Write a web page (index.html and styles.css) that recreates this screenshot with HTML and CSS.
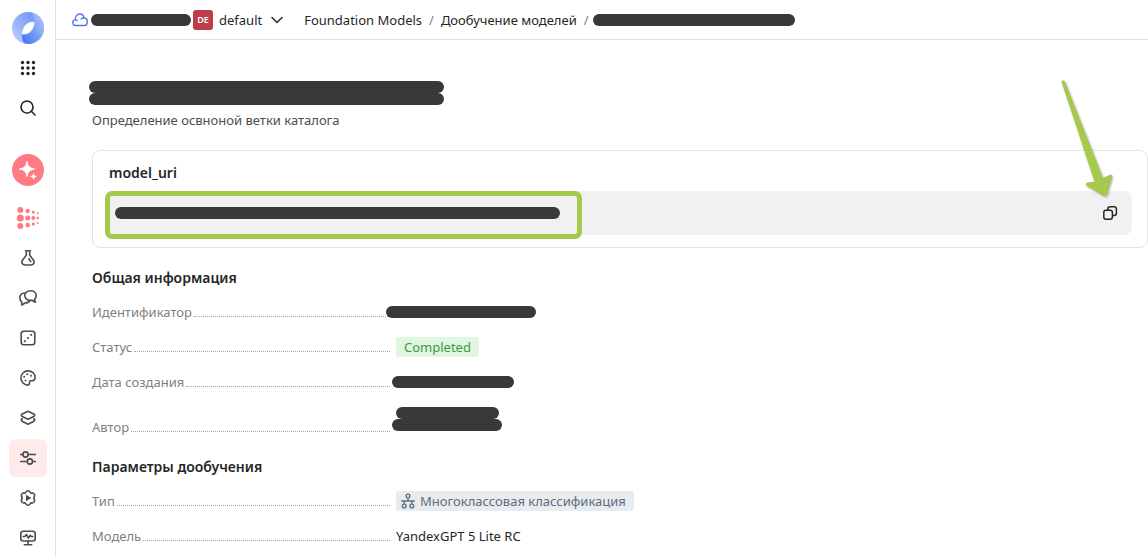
FILE: index.html
```html
<!DOCTYPE html>
<html lang="ru">
<head>
  <meta charset="UTF-8">
  <title>Дообучение моделей</title>
  <meta name="viewport" content="width=device-width, initial-scale=1.0">
  <link rel="stylesheet" href="styles.css">
</head>
<body>

<nav class="sidebar">
  <a href="#" class="logo">
    <svg width="32" height="32" viewBox="0 0 32 32">
      <defs>
        <linearGradient id="logo-light" x1="0" y1="0.8" x2="1" y2="0">
          <stop offset="0" stop-color="#b9cdfb"/>
          <stop offset="1" stop-color="#5584f5"/>
        </linearGradient>
        <linearGradient id="logo-dark" x1="0" y1="0.8" x2="1" y2="0">
          <stop offset="0" stop-color="#4678f2"/>
          <stop offset="1" stop-color="#b9cdfb"/>
        </linearGradient>
      </defs>
      <circle cx="16" cy="16" r="16" fill="url(#logo-light)"/>
      <path d="M20 .6C28 2.500 32 9 32 16c0 9-7 16-16 16-4 0-6-3-6-8 0-1 0-2 .3-3.500C14 22 18 20 20 17c2-3 3-6 2-9z" fill="url(#logo-dark)"/>
      <path d="M22 10.200c-6-.2-10.500 3-11.700 11.700 7 .5 11-3.900 11.700-11.700z" fill="#fff" stroke="#fff" stroke-linejoin="round"/>
    </svg>
  </a>
  <a href="#" class="nav-item nav-item-dark">
    <svg width="16" height="16" viewBox="0 0 16 16" fill="currentColor">
      <circle cx="2.500" cy="2.500" r="1.700"/><circle cx="8" cy="2.500" r="1.700"/><circle cx="13.500" cy="2.500" r="1.700"/>
      <circle cx="2.500" cy="8" r="1.700"/><circle cx="8" cy="8" r="1.700"/><circle cx="13.500" cy="8" r="1.700"/>
      <circle cx="2.500" cy="13.500" r="1.700"/><circle cx="8" cy="13.500" r="1.700"/><circle cx="13.500" cy="13.500" r="1.700"/>
    </svg>
  </a>
  <a href="#" class="nav-item nav-item-dark">
    <svg class="line" width="16" height="16" viewBox="0 0 16 16">
      <circle cx="7" cy="7" r="6"/><path d="M11.300 11.300l3.700 3.700"/>
    </svg>
  </a>
  <a href="#" class="assistant">
    <svg width="32" height="32" viewBox="0 0 32 32">
      <circle cx="16" cy="16" r="16" fill="#ff7b81"/>
      <path d="M15 7.500c1 5 2.500 6.500 7.500 7.500-5 1-6.500 2.500-7.500 7.500-1-5-2.500-6.500-7.500-7.500 5-1 6.500-2.500 7.500-7.500z" fill="#fff" stroke="#fff" stroke-linejoin="round"/>
      <path d="M21.500 19.500c.5 2 1 2.500 3 3-2 .5-2.500 1-3 3-.5-2-1-2.500-3-3 2-.5 2.500-1 3-3z" fill="#fff" stroke="#fff" stroke-width=".5"/>
    </svg>
  </a>
  <a href="#" class="nav-item">
    <svg width="24" height="24" viewBox="0 0 24 24" fill="#ff7b81">
      <circle cx="4.300" cy="4" r="3"/><circle cx="4.300" cy="12" r="3.500"/><circle cx="4.300" cy="20" r="3"/>
      <circle cx="11.700" cy="5" r="2.200"/><circle cx="11.700" cy="12" r="2.500"/><circle cx="11.700" cy="19" r="2.200"/>
      <circle cx="17.300" cy="6" r="1.600"/><circle cx="17.300" cy="12" r="1.900"/><circle cx="17.300" cy="18" r="1.600"/>
      <circle cx="21.700" cy="7" r="1"/><circle cx="21.700" cy="12" r="1.300"/><circle cx="21.700" cy="17" r="1"/>
    </svg>
  </a>
  <a href="#" class="nav-item">
    <svg class="line" width="16" height="16" viewBox="0 0 16 16">
      <path d="M5.500.8h5M6.300 1v4.200L2.600 10C1 12.500 2.300 15 5 15h6c2.700 0 4-2.500 2.400-5L9.700 5.200V1M8.800 8.700l1.900 2.800"/>
    </svg>
  </a>
  <a href="#" class="nav-item">
    <svg class="line" width="18" height="16" viewBox="0 0 18 16">
      <path d="M11.500.8c3.300 0 5.700 1.900 5.700 4.800 0 1.500-.6 2.700-1.600 3.600l.7 3-3.200-1.900c-4.400.6-7.300-1.500-7.300-4.700C5.800 2.800 8.200.8 11.500.8z"/>
      <path d="M5.700 3C2.900 3.200.8 5.200.8 7.900c0 1.700.7 3 1.900 3.900l.1 3.300 3.200-2.100c2.100 0 3.900-.8 4.900-2.500"/>
    </svg>
  </a>
  <a href="#" class="nav-item">
    <svg class="line" width="16" height="16" viewBox="0 0 16 16">
      <rect x="1.200" y="1.200" width="13.600" height="13.600" rx="2.500"/>
      <g class="dots"><circle cx="4.800" cy="11.200" r="1.100"/><circle cx="8" cy="8" r="1.100"/><circle cx="11.200" cy="4.800" r="1.100"/></g>
    </svg>
  </a>
  <a href="#" class="nav-item">
    <svg class="line" width="16" height="16" viewBox="0 0 16 16">
      <path d="M8 .9c4.200 0 7.100 2.800 7.100 6.400 0 2.500-1.300 3.400-3.200 3.400H11c-1.300 0-1.600.8-1.500 2 .1 1.400-.4 2.400-1.500 2.400C4 15.100.9 12 .9 8S4 .9 8 .9z"/>
      <g class="dots"><circle cx="4.200" cy="6.800" r="1"/><circle cx="7.200" cy="4.200" r="1"/><circle cx="11" cy="5.700" r="1"/><circle cx="5.500" cy="10.500" r="1"/></g>
    </svg>
  </a>
  <a href="#" class="nav-item">
    <svg class="line" width="16" height="16" viewBox="0 0 16 16">
      <path d="M8 1.200L13.800 4c1.300.7 1.300 1.800 0 2.500L8 9.200 2.200 6.500C.9 5.800.9 4.700 2.200 4z"/>
      <path d="M2.200 8.800c-1.300.7-1.300 1.700 0 2.400L8 14.200l5.800-3c1.300-.7 1.300-1.700 0-2.400"/>
    </svg>
  </a>
  <a href="#" class="nav-item nav-item-active">
    <svg class="line" width="16" height="16" viewBox="0 0 16 16">
      <path d="M.7 4.500h2.100M8.200 4.500h7.100M.7 11.500h6.500M12.600 11.500h2.700"/>
      <circle cx="5.500" cy="4.500" r="2.600"/><circle cx="9.900" cy="11.500" r="2.600"/>
    </svg>
  </a>
  <a href="#" class="nav-item">
    <svg class="line" width="16" height="16" viewBox="0 0 16 16">
      <path d="M6 2C6.600.4 9.400.4 10 2c.4 1 1.100 1.300 2 1.100 1.800-.3 3.300 1.800 2.300 3.400-.6 1-.6 2 0 3 1 1.600-.5 3.700-2.300 3.400-.9-.2-1.600.1-2 1.100-.6 1.600-3.400 1.600-4 0-.4-1-1.100-1.300-2-1.100-1.800.3-3.300-1.800-2.300-3.400.6-1 .6-2 0-3C.7 4.900 2.200 2.800 4 3.100c.9.2 1.600-.1 2-1.100z"/>
      <path d="M6 4.800v6.400L11.300 8z" fill="currentColor" stroke="none"/>
    </svg>
  </a>
  <a href="#" class="nav-item">
    <svg class="line" width="16" height="16" viewBox="0 0 16 16">
      <rect x=".8" y="1.200" width="14.400" height="9.800" rx="2.500"/>
      <path d="M3.200 6.500h1.700l1.500-2 2.100 3.600 1.800-2.800.9 1.200h1.600M8 11v3.500M4.300 14.700h7.400"/>
    </svg>
  </a>
</nav>

<div class="page">
  <header class="topbar">
    <svg class="cloud" width="16" height="16" viewBox="0 0 16 16">
      <path d="M3.500 13.500C1.900 13.500.7 12.300.7 10.700.7 9.100 1.800 7.900 3.300 7.900 3 4.500 5 2 7.800 2c2.300 0 3.900 1.500 4.100 4 2 .1 3.400 1.700 3.400 3.700 0 2.200-1.500 3.800-3.500 3.800zM3.300 7.900c.8 0 1.300.2 1.900.7M11.900 6c-1.100-.1-2 .3-2.700 1.100"/>
    </svg>
    <span class="mask mask-cloud"></span>
    <span class="folder-badge">DE</span>
    <button type="button" class="folder">default
      <svg width="12" height="8" viewBox="0 0 12 8"><path d="M1 1.500l5 5 5-5"/></svg>
    </button>
    <div class="breadcrumbs">
      <a href="#">Foundation Models</a>
      <span class="slash">/</span>
      <a href="#">Дообучение моделей</a>
      <span class="slash">/</span>
    </div>
    <span class="mask mask-crumb"></span>
  </header>

  <main>
    <div class="title">
      <span class="mask"></span>
      <span class="mask"></span>
    </div>
    <p class="description">Определение освноной ветки каталога</p>

    <section class="card">
      <h3>model_uri</h3>
      <div class="uri">
        <span class="mask mask-uri"></span>
        <div class="highlight"></div>
        <button type="button" class="copy" aria-label="Копировать">
          <svg width="16" height="16" viewBox="0 0 16 16">
            <rect x="1.800" y="5.300" width="8.600" height="8.900" rx="2.200"/>
            <path d="M5.800 5V4c0-1.400.8-2.200 2.200-2.200h4.200c1.400 0 2.200.8 2.200 2.200v4.200c0 1.400-.8 2.200-2.200 2.200h-1.500"/>
          </svg>
        </button>
        <svg class="arrow" width="52" height="120" viewBox="0 0 52 120">
          <path d="M.7 2.500C0 .5 3-.3 4 1.700L42 98l6.500-3c1.800-.8 3 .3 2.500 2.300l-5 17.200c-.5 1.600-1.700 2.200-3.200 1.500L26 106.200c-1.800-1.100-1.500-3.300.5-3.700l7-.7z"/>
        </svg>
      </div>
    </section>

    <h2>Общая информация</h2>
    <dl class="info">
      <div class="row">
        <dt>Идентификатор</dt>
        <dd><span class="mask mask-id"></span></dd>
      </div>
      <div class="row">
        <dt>Статус</dt>
        <dd><span class="label label-success">Completed</span></dd>
      </div>
      <div class="row">
        <dt>Дата создания</dt>
        <dd><span class="mask mask-date"></span></dd>
      </div>
      <div class="row row-author">
        <dt>Автор</dt>
        <dd><span class="mask mask-name"></span><span class="mask mask-login"></span></dd>
      </div>
    </dl>

    <h2>Параметры дообучения</h2>
    <dl class="info">
      <div class="row">
        <dt>Тип</dt>
        <dd>
          <span class="label label-type">
            <svg width="16" height="16" viewBox="0 0 16 16">
              <circle cx="8" cy="3" r="1.900"/><circle cx="4.200" cy="13" r="1.900"/><circle cx="11.800" cy="13" r="1.900"/>
              <path d="M8 5v3M1.200 8h13.600M4.200 8v3M11.800 8v3"/>
            </svg>
            Многоклассовая классификация
          </span>
        </dd>
      </div>
      <div class="row">
        <dt>Модель</dt>
        <dd>YandexGPT 5 Lite RC</dd>
      </div>
    </dl>
  </main>
</div>

</body>
</html>
```

FILE: styles.css
```css
* {
  box-sizing: border-box;
}
body {
  display: flex;
  height: 100vh;
  margin: 0;
  overflow: hidden;
  background: #fff;
  color: #262626;
  font-family: "Noto Sans", "Open Sans", sans-serif;
  font-size: 13px;
  line-height: 20px;
}
a {
  color: inherit;
  text-decoration: none;
}
button {
  padding: 0;
  border: none;
  background: none;
  color: inherit;
  font: inherit;
  cursor: pointer;
}
svg {
  display: block;
  flex: none;
}

/* sidebar */
.sidebar {
  display: flex;
  flex: none;
  flex-direction: column;
  align-items: center;
  width: 56px;
  padding-top: 12px;
  border-right: 1px solid #e0e0e0;
}
.logo {
  margin-bottom: 4px;
}
.assistant {
  margin: 26px 0 12px;
}
.nav-item {
  display: flex;
  flex: none;
  align-items: center;
  justify-content: center;
  width: 38px;
  height: 40px;
  color: #4d4d4d;
}
.nav-item-dark {
  color: #262626;
}
.nav-item-active {
  height: 38px;
  margin: 1px 0;
  border-radius: 7px;
  background: #ffebeb;
}
.line {
  fill: none;
  stroke: currentColor;
  stroke-width: 1.6;
  stroke-linecap: round;
  stroke-linejoin: round;
}
.dots {
  fill: currentColor;
  stroke: none;
}

/* top bar */
.page {
  flex: 1;
  min-width: 0;
}
.topbar {
  display: flex;
  align-items: center;
  height: 40px;
  padding-left: 16px;
  border-bottom: 1px solid #e0e0e0;
}
.cloud {
  margin-right: 3px;
  fill: none;
  stroke: #4d78e8;
  stroke-width: 1.4;
  stroke-linecap: round;
}
.folder-badge {
  width: 20px;
  margin: 0 6px 0 2px;
  border-radius: 3px;
  background: #bd3b4a;
  color: #fff;
  font-size: 9px;
  font-weight: 600;
  text-align: center;
}
.folder {
  display: flex;
  align-items: center;
  gap: 9px;
  margin-right: 21px;
}
.folder svg {
  fill: none;
  stroke: #262626;
  stroke-width: 1.5;
  stroke-linecap: round;
}
.breadcrumbs {
  display: flex;
  gap: 7px;
  margin-right: 4px;
  white-space: nowrap;
}
.slash {
  color: #808080;
}

/* hidden values */
.mask {
  display: block;
  flex: none;
  height: 12px;
  border-radius: 6px;
  background: #3a3838;
}
.mask-cloud {
  width: 100px;
}
.mask-crumb {
  width: 202px;
}
.mask-uri {
  width: 445px;
}
.mask-id {
  width: 150px;
  margin-left: -10px;
}
.mask-date {
  width: 122px;
  margin-left: -4px;
}
.mask-name {
  width: 103px;
}
.mask-login {
  width: 110px;
  margin-left: -4px;
}

/* content */
main {
  padding: 41px 0 0 36px;
}
.title {
  width: 355px;
  margin-left: -3px;
}
.description {
  margin: 5px 0 20px;
  color: #4d4d4d;
}
.card {
  padding: 12px 15px 12px 16px;
  border: 1px solid #e5e5e5;
  border-radius: 8px;
}
h2, h3 {
  margin: 0;
  font-size: 14px;
  font-weight: 600;
  line-height: 20px;
}
.uri {
  position: relative;
  display: flex;
  align-items: center;
  justify-content: space-between;
  height: 44px;
  margin-top: 8px;
  padding: 0 14px 0 6px;
  border-radius: 8px;
  background: #f1f1f1;
}
.highlight {
  position: absolute;
  top: 0;
  left: -4px;
  width: 477px;
  height: 48px;
  border: 5px solid #a4c94b;
  border-radius: 7px;
}
.copy svg {
  fill: none;
  stroke: #262626;
  stroke-width: 1.5;
}
.arrow {
  position: absolute;
  top: -111px;
  right: 19px;
  fill: #a4c94b;
  filter: drop-shadow(1px 1px 1px rgba(0, 0, 0, 0.3));
}
h2 {
  margin-top: 20px;
}
.info {
  display: flex;
  flex-direction: column;
  gap: 15px;
  margin: 14px 0 0;
}
.row {
  display: flex;
  align-items: flex-end;
  gap: 6px;
}
.row-author {
  height: 30px;
}
dt {
  display: flex;
  flex: none;
  width: 298px;
  color: #808080;
}
dt::after {
  content: "";
  flex: 1;
  height: 14px;
  margin-left: 2px;
  border-bottom: 1px dotted #a6a6a6;
}
dd {
  display: flex;
  flex-direction: column;
  justify-content: center;
  min-height: 20px;
  margin: 0;
}
.row-author dd {
  height: 30px;
  justify-content: flex-start;
}
.label {
  display: flex;
  align-items: center;
  gap: 4px;
  padding: 0 8px;
  border-radius: 3px;
}
.label-success {
  background: #e0f6e0;
  color: #3a9a3e;
}
.label-type {
  padding-left: 4px;
  background: #e8ecef;
  color: #5c6e80;
}
.label-type svg {
  fill: none;
  stroke: #5c6e80;
  stroke-width: 1.4;
}
```
